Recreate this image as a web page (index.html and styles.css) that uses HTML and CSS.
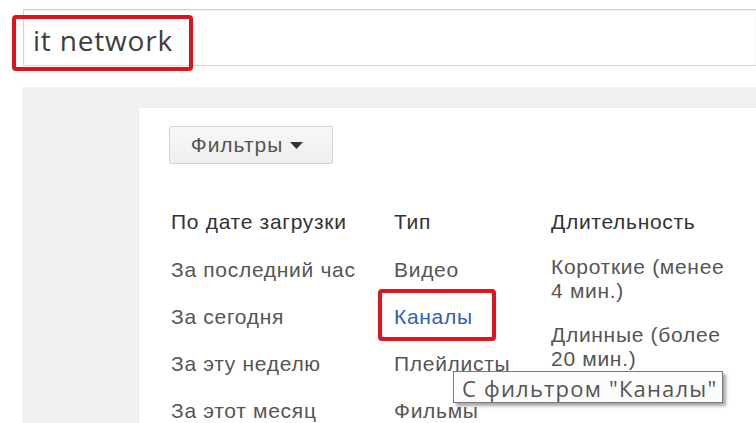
FILE: index.html
```html
<!DOCTYPE html>
<html lang="ru">
<head>
<meta charset="utf-8">
<title>it network - поиск</title>
<link rel="stylesheet" href="styles.css">
</head>
<body>
  <header class="masthead">
    <div class="search-box">
      <span class="query mark">it network</span>
    </div>
  </header>

  <main class="results">
    <section class="filter-card">
      <button class="filter-btn" type="button">
        <span>Фильтры</span>
        <svg class="caret" width="13" height="7" viewBox="0 0 13 7"><path d="M0 0h13L6.5 7z" fill="#333"/></svg>
      </button>

      <div class="filter-cols">
        <ul class="col">
          <li class="col-head">По дате загрузки</li>
          <li>За последний час</li>
          <li>За сегодня</li>
          <li>За эту неделю</li>
          <li>За этот месяц</li>
        </ul>
        <ul class="col">
          <li class="col-head">Тип</li>
          <li>Видео</li>
          <li><a class="link mark-box" href="#">Каналы</a></li>
          <li>Плейлисты</li>
          <li>Фильмы</li>
        </ul>
        <ul class="col col-dur">
          <li class="col-head">Длительность</li>
          <li>Короткие (менее<br>4 мин.)</li>
          <li>Длинные (более<br>20 мин.)</li>
        </ul>
      </div>
    </section>
  </main>

  <div class="tooltip">С фильтром "Каналы"</div>
</body>
</html>
```

FILE: styles.css
```css
html, body {
  margin: 0;
  padding: 0;
  background: #fff;
  height: 100%;
  overflow: hidden;
}

body {
  font-family: "Liberation Sans", Arial, sans-serif;
  color: #555;
}

/* search field */
.masthead {
  padding: 9px 0 0 23px;
}

.search-box {
  position: relative;
  box-sizing: border-box;
  height: 57px;
  border: 1px solid #d6d6d6;
  border-right: none;
  border-top-color: #cfcfcf;
  box-shadow: inset 0 1px 2px #ececec;
  background: #fff;
  padding: 15px 0 0 9px;
}

.query {
  display: block;
  font-family: "Open Sans", "Segoe UI", sans-serif;
  font-size: 28px;
  letter-spacing: 0.8px;
  color: #3d3d3d;
  line-height: 30px;
}

/* red highlight frame around the query */
.mark::after {
  content: "";
  position: absolute;
  left: -12px;
  top: 5px;
  width: 181px;
  height: 56px;
  box-sizing: border-box;
  border: 4.5px solid #e0121b;
  border-radius: 4px;
}

/* results area */
.results {
  margin: 21px 0 0 22px;
  padding: 21px 0 0 117px;
  background: #f1f1f1;
  height: 400px;
}

.filter-card {
  background: #fff;
  height: 100%;
  padding: 18px 0 0 30px;
  box-shadow: 0 0 1px #d8d8d8;
}

.filter-btn {
  width: 164px;
  height: 38px;
  border: 1px solid #d3d3d3;
  border-radius: 2px;
  background: linear-gradient(#f8f8f8, #eeeeee);
  font-family: "Liberation Sans", Arial, sans-serif;
  font-size: 21px;
  letter-spacing: 1px;
  color: #555;
  display: flex;
  align-items: center;
  justify-content: center;
  gap: 7px;
  padding: 0 8px 0 0;
}

.caret {
  margin-top: 1px;
}

.filter-cols {
  display: grid;
  grid-template-columns: 223px 157px 1fr;
  padding-left: 2px;
  margin-top: 46px;
}

.col {
  list-style: none;
  margin: 0;
  padding: 0;
  font-size: 21px;
  letter-spacing: 0.7px;
  line-height: 24px;
}

.col li {
  margin-bottom: 23px;
  white-space: nowrap;
}

.col-dur li {
  margin-bottom: 20px;
}

.col .col-head {
  color: #333;
  margin-bottom: 24px;
}

.col-dur .col-head {
  margin-bottom: 21px;
}

.link {
  position: relative;
  color: #2f5fae;
  text-decoration: none;
}

/* red highlight frame around the channel filter */
.mark-box::after {
  content: "";
  position: absolute;
  left: -16px;
  top: -16px;
  width: 118px;
  height: 52px;
  box-sizing: border-box;
  border: 4.5px solid #e0121b;
  border-radius: 4px;
}

/* native-style hover hint */
.tooltip {
  position: absolute;
  left: 453px;
  top: 371px;
  width: 270px;
  height: 32px;
  border: 1px solid #7a7a7a;
  background: #fcfcfc;
  box-shadow: 3px 3px 3px rgba(0, 0, 0, 0.35);
  font-family: "Open Sans", "Segoe UI", sans-serif;
  font-size: 22px;
  letter-spacing: 1.2px;
  line-height: 30px;
  color: #555;
  padding: 1px 0 0 8px;
  box-sizing: border-box;
  white-space: nowrap;
}
```
